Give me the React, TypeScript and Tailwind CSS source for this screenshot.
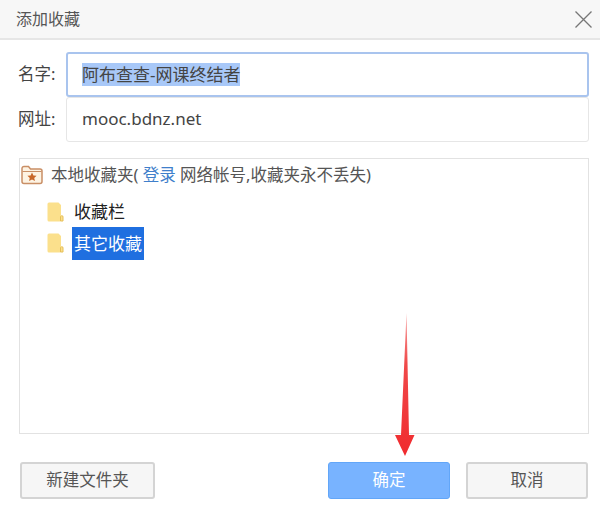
const FONT = "font-['Noto_Sans','Noto_Sans_CJK_SC',sans-serif]";

function FolderIcon() {
  return (
    <svg width="17" height="20" viewBox="0 0 17 20" className="shrink-0">
      <path d="M0.500 2a1.500 1.500 0 0 1 1.500-1.500h9.500l2.500 2.500v15a1.500 1.500 0 0 1-1.500 1.500h-10.500a1.500 1.500 0 0 1-1.500-1.500z" fill="#fbe08c" />
      <path d="M13.500 14.500v4.500h2.500v-4a1.200 1.200 0 0 0-1.300-1.300z" fill="#fbe08c" stroke="#e6bf58" strokeWidth="1" />
    </svg>
  );
}

function StarFolderIcon() {
  return (
    <svg width="22" height="20" viewBox="0 0 22 20" className="shrink-0">
      <path d="M1 16.500v-13a2 2 0 0 1 2-2h4.500l2 2.500h9.500a2 2 0 0 1 2 2v10.500a2 2 0 0 1-2 2h-16a2 2 0 0 1-2-2z" fill="#fdf3e3" stroke="#c98f66" strokeWidth="1.500" />
      <path d="M1.500 6.500h19" stroke="#c98f66" strokeWidth="1" />
      <path d="M11 7.500l1.400 3 3.200.3-2.400 2.100.8 3.200-3-1.700-3 1.700.8-3.200-2.400-2.100 3.200-.3z" fill="#c8682a" />
    </svg>
  );
}

function CloseIcon() {
  return (
    <svg width="17" height="17" viewBox="0 0 17 17" className="shrink-0">
      <path d="M0.500 0.500l16 16M16.500 0.500l-16 16" stroke="#777" strokeWidth="1.300" fill="none" />
    </svg>
  );
}

function Arrow() {
  return (
    <svg width="22" height="144" viewBox="0 0 22 144" className="absolute left-[394px] top-[313px]">
      <defs>
        <linearGradient id="shaft" x1="0" y1="0" x2="0" y2="1">
          <stop offset="0" stopColor="#f7a0a0" />
          <stop offset="0.35" stopColor="#f04a4a" />
          <stop offset="1" stopColor="#f02a2e" />
        </linearGradient>
      </defs>
      <path d="M12.500 0L15 122h5.500L11 143 1 122H7z" fill="url(#shaft)" />
    </svg>
  );
}

function Field({ label, focused, children }: { label: string; focused?: boolean; children: React.ReactNode }) {
  return (
    <div className="flex items-center">
      <span className="w-[66px] pl-[18px] shrink-0 text-[16.500px] text-[#444] whitespace-nowrap">{label}</span>
      <div
        className={
          focused
            ? "flex h-[45px] w-[523px] items-center rounded-[3px] border-2 border-[#a9c4ee] bg-white pb-[1px] pl-[14px] text-[17px] text-[#444]"
            : "flex h-[45px] w-[523px] items-center rounded-[3px] border border-[#e6e6e6] bg-white pb-[1px] pl-[15px] text-[17px] text-[#444]"
        }
      >
        {children}
      </div>
    </div>
  );
}

export default function App() {
  return (
    <div className={`relative h-[514px] w-[600px] overflow-hidden bg-white ${FONT}`}>
      <div className="flex h-[40px] items-center justify-between border-b-2 border-[#e6e6e6] bg-[#f7f7f7] pl-[16px] pr-[8px]">
        <span className="text-[16px] text-[#555]">添加收藏</span>
        <CloseIcon />
      </div>

      <div className="flex flex-col pt-[12px]">
        <Field label="名字:" focused>
          <span className="bg-[#a8c8f8] leading-[23px]">阿布查查-网课终结者</span>
        </Field>
        <Field label="网址:">mooc.bdnz.net</Field>
      </div>

      <div className="ml-[19px] mt-[16px] h-[276px] w-[570px] border border-[#e2e2e2] bg-white pl-[1px] pt-[4px]">
        <div className="flex items-center gap-[8px] text-[16.500px] text-[#555]">
          <StarFolderIcon />
          <span className="whitespace-nowrap">
            本地收藏夹(<span className="text-[#3f7fcb]"> 登录</span> 网络帐号,收藏夹永不丢失)
          </span>
        </div>
        <div className="mt-[9px] flex flex-col pl-[26px]">
          <div className="flex h-[30px] items-center gap-[8px]">
            <FolderIcon />
            <span className="px-[2px] text-[17px] text-[#222]">收藏栏</span>
          </div>
          <div className="flex h-[33px] items-center gap-[8px]">
            <FolderIcon />
            <span className="flex h-[33px] items-center bg-[#1f6fe0] px-[2px] text-[17px] text-white">其它收藏</span>
          </div>
        </div>
      </div>

      <div className="mt-[28px] flex pl-[20px]">
        <button className="h-[37px] w-[135px] rounded-[3px] border-2 border-[#d4d4d4] bg-[#f6f6f6] text-[16.500px] text-[#555]">新建文件夹</button>
        <button className="ml-[173px] h-[37px] w-[122px] rounded-[3px] border border-[#62a6f8] bg-[#78b3ff] text-[16.500px] text-white">确定</button>
        <button className="ml-[16px] h-[37px] w-[122px] rounded-[3px] border-2 border-[#d4d4d4] bg-[#f6f6f6] text-[16.500px] text-[#555]">取消</button>
      </div>

      <Arrow />
    </div>
  );
}
